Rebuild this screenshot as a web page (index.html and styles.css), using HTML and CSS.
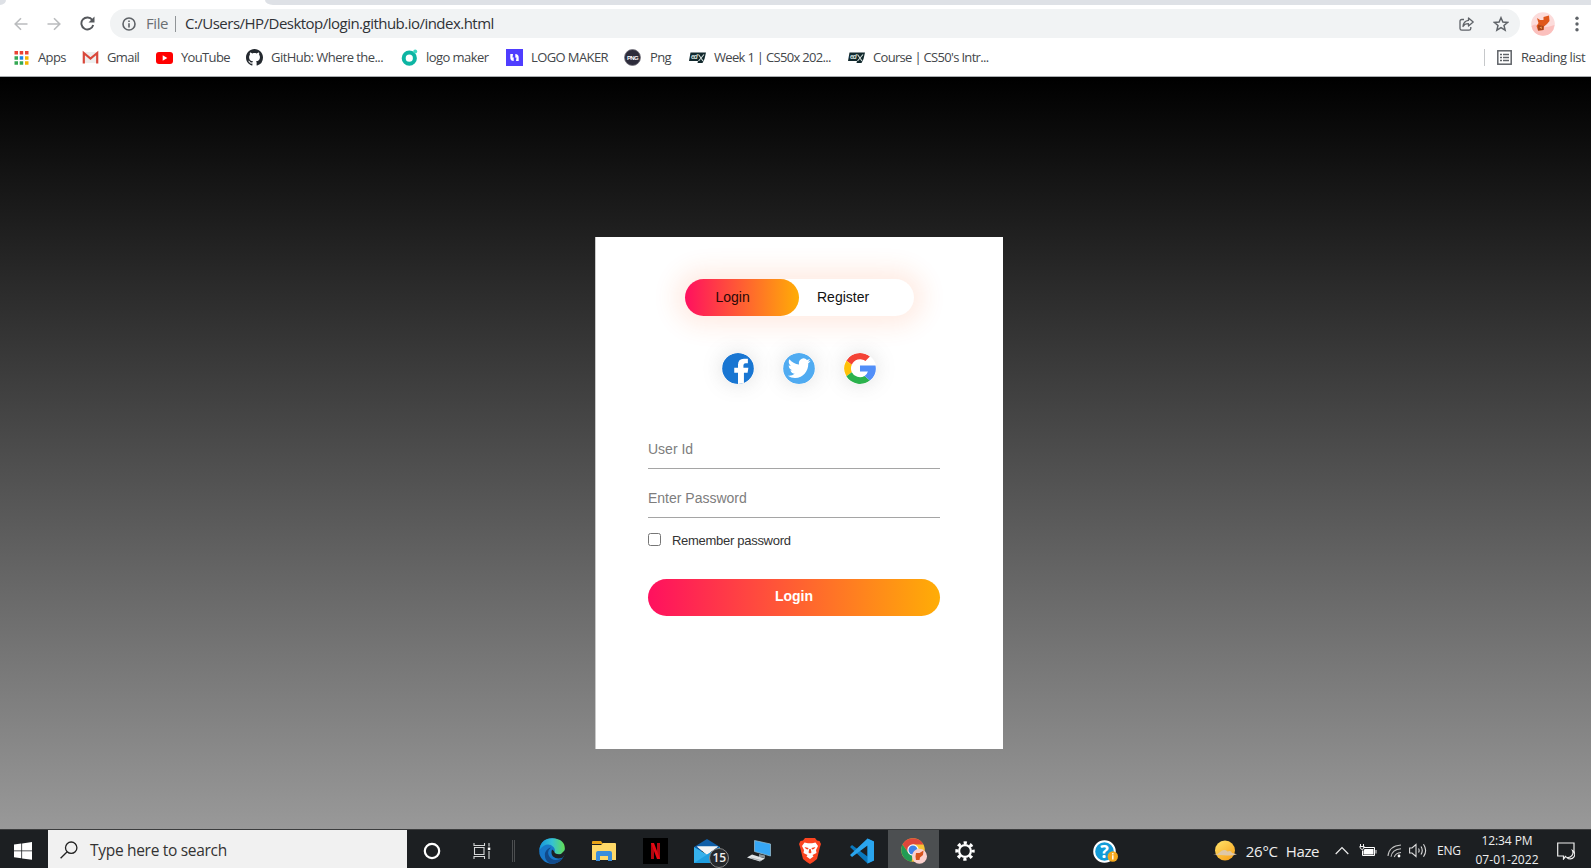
FILE: index.html
```html
<!DOCTYPE html>
<html lang="en">
<head>
<meta charset="utf-8">
<title>Login</title>
<link rel="stylesheet" href="styles.css">
</head>
<body>
<header class="chrome">
  <div class="tabstrip"><span class="tab-prev"></span><span class="tab-active"></span><span class="tab-rest"></span></div>
  <div class="toolbar">
    <svg class="nav-back" width="14" height="14" viewBox="0 0 14 14" fill="none" stroke="#babcbe" stroke-width="1.6"><path d="M13.5 7H1.5M7 1.2L1.2 7L7 12.8"/></svg>
    <svg class="nav-forward" width="14" height="14" viewBox="0 0 14 14" fill="none" stroke="#babcbe" stroke-width="1.6"><path d="M.5 7H12.500M7 1.200L12.800 7L7 12.800"/></svg>
    <svg class="nav-reload" width="15" height="15" viewBox="0 0 15 15"><path d="M12.300 4A6 6 0 1 0 13.200 9" fill="none" stroke="#55585c" stroke-width="1.900"/><path d="M14.500.5V6.500H8.500Z" fill="#55585c"/></svg>
    <div class="omnibox">
      <svg class="info" width="14" height="14" viewBox="0 0 14 14"><circle cx="7" cy="7" r="6" fill="none" stroke="#5f6368" stroke-width="1.600"/><path d="M7 6.200V10.500M7 3.500V5" stroke="#5f6368" stroke-width="1.600"/></svg>
      <span class="scheme">File</span>
      <span class="scheme-line"></span>
      <span class="url">C:/Users/HP/Desktop/login.github.io/index.html</span>
      <svg class="share" width="15" height="14" viewBox="0 0 15 14" fill="none" stroke="#5f6368" stroke-width="1.300" stroke-linejoin="round"><path d="M5 2.500H2.800Q1 2.500 1 4.300V11.500Q1 13.200 2.800 13.200H10Q11.800 13.200 11.800 11.500V10"/><path d="M9.500 1L14.200 5L9.500 9V6.700Q5.500 6.700 4 9.500Q4.500 4 9.500 3.400Z"/></svg>
      <svg class="star" width="16" height="16" viewBox="0 0 24 24"><path d="M12 2.500L14.800 9L22 9.600L16.500 14.300L18.200 21.300L12 17.500L5.800 21.300L7.500 14.300L2 9.600L9.200 9Z" fill="none" stroke="#5f6368" stroke-width="2.200"/></svg>
    </div>
    <svg class="avatar" width="24" height="24" viewBox="0 0 24 24"><circle cx="12" cy="12" r="11.800" fill="#fcdcdb"/><path d="M.5 14Q4 11 8 14T23.500 13Q22 23.800 12 23.800Q2 23 .5 14Z" fill="#fbc0bd"/><path d="M6 6L9 8L12.500 8L12.500 5L18 3.500L18.500 9L16 12L13 14.500L12.500 18L7 18.500L5.500 14L7.500 11Z" fill="#df571b"/><path d="M7 13L12.500 14L12.500 18L7 18.500Z" fill="#a9441b"/><path d="M8.500 15.500L10.500 14.500L11 17Z" fill="#f3a04e"/></svg>
    <svg class="kebab" width="4" height="16" viewBox="0 0 4 16" fill="#5f6368"><circle cx="2" cy="2.200" r="1.700"/><circle cx="2" cy="8" r="1.700"/><circle cx="2" cy="13.800" r="1.700"/></svg>
  </div>
  <nav class="bookmarks">
    <a class="bm bm-apps"><svg width="17" height="17" viewBox="0 0 17 17"><path fill="#ea4335" d="M.5 2h3.500v3.500H.500zM5.700 2H9.200v3.500H5.700zM11 2h3.500v3.500H11z"/><path fill="#34a853" d="M.5 7.200h3.500V10.700H.500zM.5 12.300h3.500v3.500H.500zM5.700 12.300H9.200v3.500H5.700z"/><path fill="#1a87e8" d="M5.700 7.200H9.200V10.700H5.700z"/><path fill="#f5b400" d="M11 7.200h3.500V10.700H11zM11 12.300h3.500v3.500H11z"/></svg><span>Apps</span></a>
    <a class="bm bm-gmail"><svg width="17" height="17" viewBox="0 0 17 17"><path d="M2 3H15V14H2Z" fill="#eee"/><path d="M1.800 14.500V4L8.500 9.500L15.200 4V14.500" fill="none" stroke="#d9483b" stroke-width="2.200"/></svg><span>Gmail</span></a>
    <a class="bm bm-youtube"><svg width="17" height="17" viewBox="0 0 17 17"><rect y="3" width="17" height="12" rx="3" fill="#f00"/><path d="M6.700 6.300V11.700L11.300 9Z" fill="#fff"/></svg><span>YouTube</span></a>
    <a class="bm bm-github"><svg width="17" height="17" viewBox="0 0 16 16"><path fill="#24292f" d="M8 0C3.580 0 0 3.580 0 8c0 3.540 2.290 6.530 5.470 7.590.4.070.55-.17.55-.38 0-.19-.01-.82-.01-1.490-2.010.37-2.530-.49-2.690-.94-.09-.23-.48-.94-.82-1.130-.28-.15-.68-.52-.01-.53.63-.01 1.080.58 1.230.82.72 1.210 1.870.87 2.330.66.07-.52.28-.87.51-1.070-1.780-.2-3.640-.89-3.640-3.950 0-.87.31-1.590.82-2.150-.08-.2-.36-1.020.08-2.120 0 0 .67-.21 2.200.82.64-.18 1.320-.27 2-.27s1.360.09 2 .27c1.530-1.040 2.200-.82 2.200-.82.44 1.100.16 1.920.08 2.120.51.56.82 1.270.82 2.150 0 3.070-1.870 3.750-3.650 3.950.29.25.54.73.54 1.480 0 1.070-.01 1.930-.01 2.200 0 .21.15.46.55.38A8.010 8.010 0 0 0 16 8c0-4.420-3.580-8-8-8z"/></svg><span>GitHub: Where the...</span></a>
    <a class="bm bm-maker"><svg width="17" height="17" viewBox="0 0 17 17"><circle cx="8.300" cy="9.200" r="5.600" fill="none" stroke="#0db5a3" stroke-width="4"/><circle cx="14.200" cy="2.500" r="2" fill="#3ed9c3"/></svg><span>logo maker</span></a>
    <a class="bm bm-logo"><svg width="17" height="17" viewBox="0 0 17 17"><path d="M0 0H17V17H0Z" fill="#4f3dff"/><path d="M7.700 5V12Q4.300 12 4.300 8.500V5ZM9.300 5Q12.700 5 12.700 8.500V12H9.300Z" fill="#fff"/><path d="M7 5H8.500V8.200L6.500 8.500ZM8.500 12H10L10.500 8.500L8.500 8.800Z" fill="#4f3dff"/></svg><span>LOGO MAKER</span></a>
    <a class="bm bm-png"><svg width="17" height="17" viewBox="0 0 17 17"><circle cx="8.500" cy="8.500" r="8" fill="#2d2c3b" stroke="#77757f" stroke-width=".8"/><text x="8.500" y="10.800" class="png-mark">PNG</text></svg><span>Png</span></a>
    <a class="bm bm-week"><svg width="17" height="17" viewBox="0 0 17 17"><path d="M1.500 3.500H17L15.500 10L13.500 14H8.500L9 12H0Z" fill="#12292d"/><text x="5" y="10" class="edx-mark">ed</text><path d="M9.500 5.500L14 12M15 5.500L9.500 12" stroke="#d5e0dd" stroke-width="1.100"/></svg><span>Week 1 | CS50x 202...</span></a>
    <a class="bm bm-course"><svg width="17" height="17" viewBox="0 0 17 17"><path d="M1.500 3.500H17L15.500 10L13.500 14H8.500L9 12H0Z" fill="#12292d"/><text x="5" y="10" class="edx-mark">ed</text><path d="M9.500 5.500L14 12M15 5.500L9.500 12" stroke="#d5e0dd" stroke-width="1.100"/></svg><span>Course | CS50's Intr...</span></a>
    <span class="bm-line"></span>
    <a class="bm bm-reading"><svg width="15" height="15" viewBox="0 0 15 15" fill="none" stroke="#5f6368"><rect x=".8" y=".8" width="13.400" height="13.400" stroke-width="1.500"/><path d="M3 4.500H5M3 7.500H5M3 10.500H5M6 4.500H12M6 7.500H12M6 10.500H12" stroke-width="1.300"/></svg><span>Reading list</span></a>
  </nav>
</header>

<main class="page">
  <section class="card">
    <div class="toggle"><button class="toggle-login">Login</button><button class="toggle-register">Register</button></div>
    <div class="social">
      <svg viewBox="0 0 32 32"><circle cx="16" cy="16" r="16" fill="#1976d2"/><path d="M16 32V20.300H12.200V15.300H16V12.500Q16 6 22 6H26V10.500H23.700Q21.500 10.500 21.500 12.700V15.300H26.500L25.700 20.300H22V31Q19 32 16 32Z" fill="#fff"/></svg>
      <svg viewBox="0 0 32 32"><circle cx="16" cy="16" r="16" fill="#50abf1"/><path transform="translate(4.700 3.300) scale(.96 1.030)" fill="#fff" d="M23.950 4.570a10 10 0 0 1-2.820.77 4.960 4.960 0 0 0 2.160-2.720c-.95.550-2 .96-3.130 1.180a4.920 4.920 0 0 0-8.380 4.480C7.690 8.090 4.070 6.130 1.640 3.160a4.820 4.820 0 0 0-.67 2.480c0 1.710.87 3.210 2.190 4.100a4.900 4.900 0 0 1-2.230-.62v.06a4.920 4.920 0 0 0 3.950 4.830 5 5 0 0 1-2.210.08 4.940 4.940 0 0 0 4.600 3.420A9.870 9.870 0 0 1 0 19.540a14 14 0 0 0 7.550 2.210c9.050 0 14-7.500 14-13.990 0-.210 0-.420-.020-.630a9.900 9.900 0 0 0 2.460-2.550z"/></svg>
      <svg viewBox="0 0 32 32"><path d="M16 0A16 16 0 0 1 26 3.600L21.500 8.300A9 9 0 0 0 7.700 12.200L2.200 8A16 16 0 0 1 16 0Z" fill="#f44336"/><path d="M2.200 8L7.700 12.200A9.200 9.200 0 0 0 7.700 19.800L2.200 24A16 16 0 0 1 2.200 8Z" fill="#ffc107"/><path d="M2.200 24L7.700 19.800A9.200 9.200 0 0 0 20.600 23.800L26 28.400A16 16 0 0 1 2.200 24Z" fill="#2bb24c"/><path d="M16 13H31.700A16 16 0 0 1 26 28.400L20.600 23.800A8 8 0 0 0 24 19.200H16Z" fill="#518ef8"/></svg>
    </div>
    <form class="login-form">
      <input class="field" type="text" placeholder="User Id">
      <input class="field field-pass" type="password" placeholder="Enter Password">
      <label class="remember"><span class="box"></span><span>Remember password</span></label>
      <button class="submit" type="button">Login</button>
    </form>
  </section>
</main>

<footer class="taskbar">
  <div class="start"><svg width="18" height="18" viewBox="0 0 18 18" fill="#fff"><path d="M0 2.500L7.300 1.500V8.500H0ZM8.100 1.400L18 0V8.500H8.100ZM0 9.300H7.300V16.300L0 15.300ZM8.100 9.300H18V17.800L8.100 16.400Z"/></svg></div>
  <div class="search"><svg width="18" height="18" viewBox="0 0 18 18" fill="none" stroke="#222" stroke-width="1.300"><circle cx="11.200" cy="6.700" r="5.700"/><path d="M7.200 10.800L.6 17.300"/></svg><span>Type here to search</span></div>
  <div class="slot slot-cortana"><svg width="18" height="18" viewBox="0 0 18 18"><circle cx="9" cy="9" r="7.200" fill="none" stroke="#fff" stroke-width="2.200"/></svg></div>
  <div class="slot slot-view"><svg width="18" height="18" viewBox="0 0 18 18" fill="none" stroke="#d6d7d8" stroke-width="1.100"><path d="M1 1V3.500H11.500V1M1 17V14.500H11.500V17M1.500 5.500H11V12.500H1.500ZM16 1V4.500M16 9V17"/><path d="M14.800 5.500H17.300V8H14.800Z" fill="#fff" stroke="none"/></svg></div>
  <div class="sep"></div>
  <div class="app"><svg width="26" height="26" viewBox="0 0 26 26"><defs><linearGradient id="edgeTop" x1="0" x2="1"><stop offset="0" stop-color="#1595dc"/><stop offset=".5" stop-color="#35c1d4"/><stop offset="1" stop-color="#63de53"/></linearGradient></defs><circle cx="13" cy="13" r="12.800" fill="#1878c9"/><path d="M.3 12Q2 0 13.500.2Q25.800 1 25.800 10.500Q25.500 16 20 16.500Q15 16.500 15 14.500Q17 12 14.500 9Q8 3 .3 12Z" fill="url(#edgeTop)"/><path d="M12 9.500Q7.500 13 10 18Q14 24.500 23.500 20.200Q18.500 27 11 25.600Q5 22 6 15Q8 10 12 9.500Z" fill="#114a8b"/><path d="M15 13Q16 17 22 16L26 12V16L23.800 19.600Q18 22 14 18.500Q11.500 15.500 13 11.500Z" fill="#1d2023"/></svg></div>
  <div class="app"><svg width="24" height="20" viewBox="0 0 24 20"><path d="M0 1Q0 0 1 0H9L11 3H0Z" fill="#e8a317"/><path d="M0 4H9L11 2H23Q24 2 24 3V19H0Z" fill="#ffd968"/><path d="M4 19V12Q4 10 6 10H18Q20 10 20 12V20H16V15H8V20H4Z" fill="#3a8edb"/></svg></div>
  <div class="app"><svg width="25" height="26" viewBox="0 0 25 26"><path d="M0 0H25V26H0Z" fill="#000"/><path d="M8 5H11V21H8ZM14 5H17V21H14Z" fill="#b20710"/><path d="M8 5H11L17 21H14Z" fill="#e50914"/></svg></div>
  <div class="app app-mail"><svg width="26" height="24" viewBox="0 0 26 24"><path d="M0 8L13 0L26 8V12H0Z" fill="#0f5ea8"/><path d="M3 7.500H24L13 16Z" fill="#f4f5f6"/><path d="M0 8L13 15.500L26 8V24H0Z" fill="#35b1ec"/><path d="M3 7.500H24L13 15.500Z" fill="#f4f5f6"/><path d="M0 24L18 12.500L26 17V24Z" fill="#1e9ee0"/></svg><span class="badge">15</span></div>
  <div class="app"><svg width="24" height="24" viewBox="0 0 24 24"><path d="M7.500 1.500L23.500 5V17L7.500 12.500Z" fill="#36a7f6" stroke="#91b7cc" stroke-width=".8"/><path d="M12 15L18 16.500V19L12 18Z" fill="#8a949b"/><path d="M0 18.500L5 15.500L18 19.500L13 22.500Z" fill="#dfe3e6"/><path d="M4 19L14 21.500" stroke="#a5adb2"/></svg></div>
  <div class="app"><svg width="22" height="26" viewBox="0 0 22 26"><path d="M6 0H16L18 2.500L20.500 3L22 6L21 9L18 21Q14 24.500 11 26Q8 24.500 4 21L1 9L0 6L1.500 3L4 2.500Z" fill="#fb4420"/><path d="M5.500 4.500L9 5.200H13L16.500 4.500L19 8L17 12L17.500 15L13.500 17L14.500 18.500L11 21L7.500 18.500L8.500 17L4.500 15L5 12L3 8Z" fill="#fff"/><path d="M5.500 9L9.500 10L9 11.500L7 11ZM16.500 9L12.500 10L13 11.500L15 11ZM10.300 11H11.700L12.500 14.500L11 15.500L9.500 14.500Z" fill="#fb4420"/></svg></div>
  <div class="app"><svg width="26" height="26" viewBox="0 0 26 26"><path d="M18.500.5L25 3.500V22.500L18.500 25.500L1 9L3 7L18.500 18.500Z" fill="#0a78bd"/><path d="M18.500.5L25 3.500V22.500L18.500 25.500V7.500L3 19L1 17Z" fill="#2aa5ee"/></svg></div>
  <div class="app app-on"><svg width="26" height="26" viewBox="0 0 26 26"><circle cx="12" cy="12" r="11.800" fill="#f8c436"/><path d="M1.500 6.500A12 12 0 0 1 22.500 6.500H12L7.500 15Z" fill="#df473b"/><path d="M1.500 6.500L7.500 15L12 17.500L10.500 23.800A12 12 0 0 1 1.500 6.500Z" fill="#229b54"/><circle cx="12" cy="12" r="5.700" fill="#fff"/><circle cx="12" cy="12" r="4.500" fill="#3f83e8"/><circle cx="18.500" cy="18.300" r="7.500" fill="#fbd0cd"/><path d="M15 15L18.500 15L22.500 12.500L22 17L19 19.500L18.500 22L15 22L14.500 18.500Z" fill="#d7541d"/></svg></div>
  <div class="app"><svg width="20" height="20" viewBox="0 0 20 20" fill="none" stroke="#fff"><circle cx="10" cy="10" r="5.900" stroke-width="2.200"/><circle cx="10" cy="10" r="8.200" stroke-width="3" stroke-dasharray="3.220 3.220" stroke-dashoffset="1.610"/></svg></div>
  <div class="help"><svg width="25" height="24" viewBox="0 0 25 24"><circle cx="11.500" cy="11.500" r="10.300" fill="#139bd7" stroke="#fff" stroke-width="2"/><text x="11.500" y="18" class="help-mark">?</text><circle cx="19.800" cy="16.500" r="5.200" fill="#f5a81c"/><path d="M19.800 15.300V19.500M19.800 13V14.400" stroke="#fff" stroke-width="1.400"/></svg></div>
  <div class="weather"><svg width="24" height="22" viewBox="0 0 24 22"><defs><linearGradient id="sun" x1="0" y1="0" x2=".7" y2="1"><stop offset="0" stop-color="#ffe46c"/><stop offset="1" stop-color="#f8a51f"/></linearGradient></defs><circle cx="12" cy="10.500" r="10" fill="url(#sun)"/><path d="M0 14.500Q5 14.500 7 12Q11 8.500 14.500 11.500Q18 10 19 13L24 14.200Q20 16 14 15.500T0 14.500Z" fill="#dfc8a8"/></svg><span class="temp">26°C</span><span class="haze">Haze</span></div>
  <div class="tray">
    <svg class="t-up" width="14" height="9" viewBox="0 0 14 9" fill="none" stroke="#eee" stroke-width="1.200"><path d="M.7 8L7 1.500L13.300 8"/></svg>
    <svg class="t-battery" width="18" height="13" viewBox="0 0 18 13"><path d="M4.500 3.500H15.500V11.500H3.500V6.500" fill="none" stroke="#fff"/><path d="M5.500 5H14.500V10.500H4.500V7Z" fill="#fff"/><path d="M17 6V9.500M1.500 0V2M4.500 0V2M.8 2.500H5.200Q5 5.500 3 5.500Q1 5 .8 2.500Z" stroke="#eee" fill="none"/></svg>
    <svg class="t-wifi" width="15" height="14" viewBox="0 0 15 14" fill="none" stroke="#c5c5c5" stroke-width="1.100"><path d="M1 12Q2 2 14 1M4 12.800Q5 5.500 14 4.800M7.300 13Q8.500 9 14 8.500"/><circle cx="12" cy="12" r="1.400" fill="#fff" stroke="none"/></svg>
    <svg class="t-volume" width="18" height="15" viewBox="0 0 18 15" fill="none" stroke="#ddd" stroke-width="1.100"><path d="M.6 5H3L7 1.500V13.500L3 10H.6ZM9.500 5.500Q10.800 7.500 9.500 9.500M12 3.500Q14.500 7.500 12 11.500M14.500 1.200Q18.800 7.500 14.500 13.800"/></svg>
    <span class="lang">ENG</span>
    <div class="clock"><span class="time">12:34 PM</span><span class="date">07-01-2022</span></div>
    <svg class="t-note" width="18" height="18" viewBox="0 0 18 18" fill="none" stroke="#eee" stroke-width="1.200"><path d="M9 14L6.500 17V14H.7V1H17V10"/><path d="M15.500 8.500A4.500 4.500 0 1 1 10 15.500A5 5 0 0 0 15.500 8.500Z"/></svg>
  </div>
</footer>
</body>
</html>
```

FILE: styles.css
```css
* { box-sizing: border-box; }
body {
  margin: 0;
  width: 1591px;
  height: 868px;
  overflow: hidden;
  display: flex;
  flex-direction: column;
  font-family: "Open Sans", "Noto Sans", sans-serif;
}
svg { display: block; flex: none; }
button, input { font-family: "Liberation Sans", Arial, sans-serif; }

/* browser frame */
.chrome { height: 77px; background: #fff; border-bottom: 1px solid #a9adb0; flex: none; }
.tabstrip { height: 5px; display: flex; background: #fff; }
.tab-prev { width: 6px; background: #dee1e6; border-bottom-right-radius: 6px 5px; }
.tab-active { width: 259px; }
.tab-rest { flex: 1; background: #dee1e6; border-bottom-left-radius: 8px 5px; }
.toolbar { height: 37px; display: flex; align-items: center; padding: 0 12px 0 14px; }
.nav-forward { margin-left: 19px; }
.nav-reload { margin-left: 19px; }
.omnibox {
  flex: none;
  width: 1410px;
  height: 29px;
  margin-left: 15px;
  padding: 0 11px 0 12px;
  border-radius: 15px;
  background: #f1f3f4;
  display: flex;
  align-items: center;
  font-size: 15px;
}
.scheme { margin: -1px 0 0 10px; width: 29px; color: #6b6f73; letter-spacing: -.4px; white-space: nowrap; }
.scheme-line { width: 1px; height: 16px; background: #909497; }
.url { margin: -1px 0 0 9px; color: #303236; white-space: nowrap; letter-spacing: -.52px; }
.share { margin-left: auto; }
.star { margin-left: 19px; }
.avatar { margin-left: 11px; }
.kebab { margin-left: auto; }

.bookmarks { height: 34px; display: flex; align-items: center; padding: 0 0 3px 14px; font-size: 13px; color: #44474b; }
.bm { display: flex; align-items: center; gap: 8px; flex: none; white-space: nowrap; }
.bm span { margin-top: -2px; }
.bm svg { margin-top: -1px; }
.bm-apps { width: 68px; gap: 7px; letter-spacing: -.6px; }
.bm-gmail { width: 74px; gap: 8px; letter-spacing: -.6px; }
.bm-youtube { width: 90px; letter-spacing: -.65px; }
.bm-github { width: 155px; letter-spacing: -.55px; }
.bm-maker { width: 105px; letter-spacing: -.55px; }
.bm-logo { width: 118px; letter-spacing: -.6px; }
.bm-png { width: 65px; gap: 9px; letter-spacing: -.6px; }
.bm-week { width: 159px; letter-spacing: -.68px; }
.bm-course { letter-spacing: -.68px; }
.bm-line { width: 1px; height: 17px; margin-left: auto; background: #c6c8ca; }
.bm-reading { width: 106px; padding-left: 12px; gap: 9px; letter-spacing: -.45px; }
.png-mark { font: bold 6px "Liberation Sans", sans-serif; fill: #fff; text-anchor: middle; }
.edx-mark { font: italic bold 6.500px "Liberation Sans", sans-serif; fill: #d5e0dd; text-anchor: middle; }

/* page */
.page { flex: 1; padding: 160px 589px 0 595px; background: linear-gradient(#000, #999); }
.card { width: 407.500px; height: 512px; background: #fff; border-left: 1px solid #c9c9c9; padding: 42px 62.500px 0 52px; font-family: "Liberation Sans", Arial, sans-serif; }
.toggle { display: flex; width: 229.500px; height: 37px; margin-left: 36.500px; border-radius: 19px; box-shadow: 0 0 23px 10px #ff61241f; }
.toggle button { border: 0; height: 37px; padding: 0 0 2px; font-size: 14px; text-align: left; color: #111; background: none; }
.toggle .toggle-login { width: 114px; padding-left: 31px; border-radius: 19px; color: #2a0808; background: linear-gradient(to right, #ff105f, #ffad06); }
.toggle .toggle-register { padding-left: 18.500px; }
.social { display: flex; gap: 29px; margin: 37px 0 0 74px; }
.social svg { width: 32px; height: 31px; border-radius: 50%; box-shadow: 0 0 20px #7f7f7f3d; }
.social svg { transform: scaleX(1.020); }
.login-form { display: flex; flex-direction: column; margin-top: 44px; }
.field { border: 0; border-bottom: 1px solid #a5a5a5; height: 41px; padding: 2px 0 0; font-size: 14px; background: none; outline: 0; }
.field::placeholder { color: #7d7d7d; opacity: 1; }
.field-pass { margin-top: 8px; }
.remember { display: flex; align-items: center; gap: 11px; height: 16px; margin-top: 14px; font-size: 13px; letter-spacing: -.29px; color: #333; white-space: nowrap; }
.box { width: 13px; height: 13px; border: 1px solid #767676; border-radius: 2.500px; margin-top: -1px; }
.submit { margin-top: 31px; height: 37px; border: 0; border-radius: 19px; background: linear-gradient(to right, #ff105f, #ffad06); color: #fff; font-size: 14px; font-weight: bold; padding: 0 0 3px; }

/* taskbar */
.taskbar { height: 39px; flex: none; display: flex; align-items: center; background: #1c1f22; color: #eee; border-top: 1px solid #3b3c3d; }
.taskbar > div { flex: none; height: 100%; display: flex; align-items: center; }
.taskbar .start { width: 48px; padding: 3px 0 0 14px; }
.taskbar .search { width: 359px; background: #f1f1f1; padding: 2px 0 0 12px; color: #333; font-size: 15.500px; gap: 12px; letter-spacing: -.3px; }
.taskbar .slot { justify-content: center; padding-top: 3px; }
.slot-cortana { width: 50px; }
.slot-view { width: 49px; }
.taskbar .sep { width: 3px; height: 22px; margin: 3px 11.500px 0 6px; border: solid #4c4e50; border-width: 0 1px; }
.taskbar .app { width: 51.600px; justify-content: center; padding-top: 3px; position: relative; }
.taskbar .app-on { margin-left: .6px; width: 51px; background: #4c4f51; }
.badge { position: absolute; left: 28px; top: 18px; width: 20px; height: 20px; border: 1px solid #888; border-radius: 50%; background: #25282b; font-size: 12px; font-weight: 600; line-height: 17px; text-align: center; }
.taskbar .help { width: 122px; margin-left: 102px; padding-top: 5px; }
.help-mark { font: bold 18px "Open Sans", sans-serif; fill: #fff; text-anchor: middle; }
.taskbar .weather { padding-top: 3px; font-size: 15px; margin-left: -2px; }
.temp { margin: 0 0 0 9px; width: 40px; letter-spacing: -.3px; }
.haze { letter-spacing: -.4px; }
.taskbar .tray { margin-left: auto; padding: 3px 16px 0 0; font-size: 12px; }
.t-up { margin-right: 1px; }
.t-battery { margin-left: 9px; }
.t-wifi { margin-left: 10px; }
.t-volume { margin-left: 7px; }
.lang { margin-left: 10px; width: 25px; letter-spacing: -.2px; }
.clock { width: 64px; margin: -2px 0 0 13px; display: flex; flex-direction: column; align-items: center; line-height: 19px; white-space: nowrap; }
.time { letter-spacing: -.1px; }
.date { letter-spacing: .05px; }
.t-note { margin-left: 18px; }
```
